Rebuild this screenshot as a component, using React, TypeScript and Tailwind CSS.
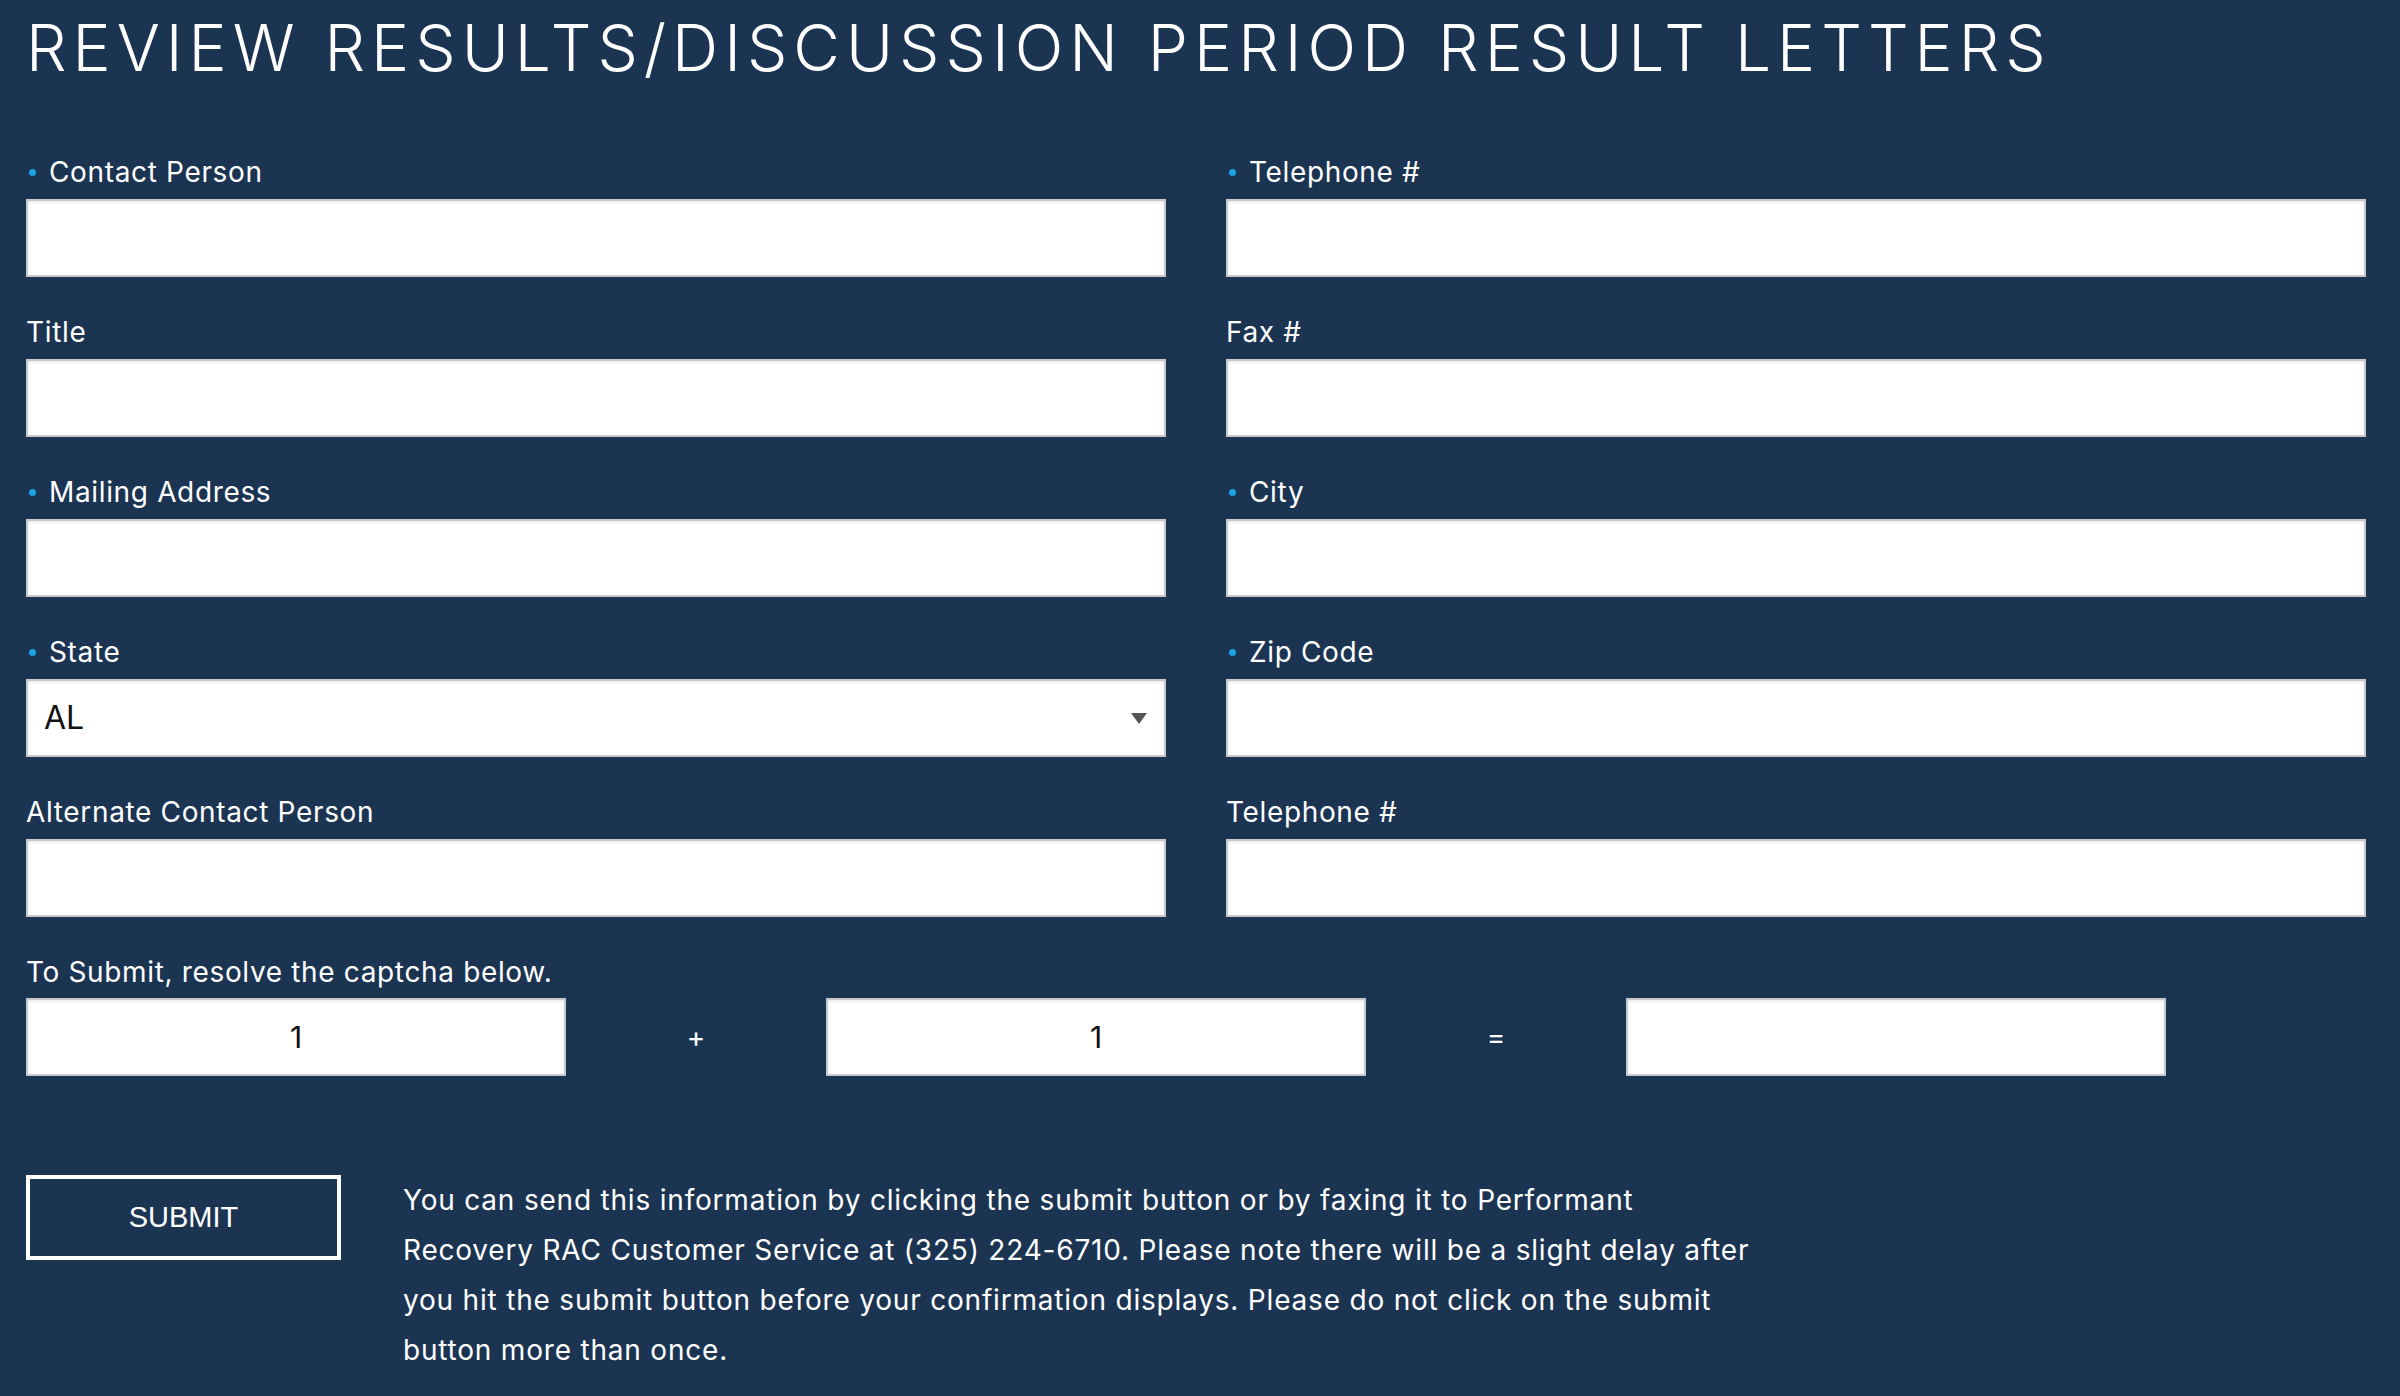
import React from "react";

interface FieldProps {
  label: string;
  required?: boolean;
  children?: React.ReactNode;
}

const boxCls =
  "block h-[78px] bg-white border-2 border-[#c9c9c9] shadow-[inset_0_2px_3px_rgba(0,0,0,0.08)] px-[26px] text-[30px] text-[#111] outline-none";

const Field: React.FC<FieldProps> = ({ label, required, children }) => {
  return (
    <div className="mb-[37px]">
      <label className="flex items-center h-[36px] mb-[9px] text-[28px] text-white tracking-[0.65px]">
        {required && (
          <span className="inline-block w-[7px] h-[7px] rounded-full bg-[#1ba1e2] ml-[3px] mr-[13px]" />
        )}
        {label}
      </label>
      {children ?? <input type="text" className={`${boxCls} w-full`} />}
    </div>
  );
};

const states = ["AL", "AK", "AZ", "AR", "CA", "CO", "CT", "DE", "FL", "GA"];

export default function App() {
  return (
    <div
      className="min-h-screen bg-[#1b3452] pl-[26px] pr-[34px] pt-[16px] pb-[40px]"
      style={{ fontFamily: "Inter, 'Open Sans', sans-serif" }}
    >
      <h1 className="text-[64px] leading-none font-light text-white tracking-[6px] mb-[74px]">
        REVIEW RESULTS/DISCUSSION PERIOD RESULT LETTERS
      </h1>

      <form onSubmit={(e) => e.preventDefault()}>
        <div className="grid grid-cols-2 gap-x-[60px]">
          <Field label="Contact Person" required />
          <Field label="Telephone #" required />
          <Field label="Title" />
          <Field label="Fax #" />
          <Field label="Mailing Address" required />
          <Field label="City" required />
          <Field label="State" required>
            <div className="relative">
              <select className={`${boxCls} w-full appearance-none pl-[16px] text-[32px]`} defaultValue="AL">
                {states.map((s) => (
                  <option key={s} value={s}>
                    {s}
                  </option>
                ))}
              </select>
              <svg
                className="absolute right-[19px] top-[34px] pointer-events-none"
                width="16"
                height="11"
                viewBox="0 0 16 11"
              >
                <path d="M0 0h16L8 11z" fill="#555" />
              </svg>
            </div>
          </Field>
          <Field label="Zip Code" required />
          <Field label="Alternate Contact Person" />
          <Field label="Telephone #" />
        </div>

        <div className="flex items-center h-[36px] mb-[8px] text-[28px] text-white tracking-[0.65px]">
          To Submit, resolve the captcha below.
        </div>
        <div className="flex items-center">
          <input type="text" readOnly defaultValue="1" className={`${boxCls} w-[540px] text-center`} />
          <span className="w-[260px] text-center text-[28px] text-white">+</span>
          <input type="text" readOnly defaultValue="1" className={`${boxCls} w-[540px] text-center`} />
          <span className="w-[260px] text-center text-[28px] text-white">=</span>
          <input type="text" className={`${boxCls} w-[540px] text-center`} />
        </div>

        <div className="flex items-start gap-[62px] mt-[99px]">
          <button
            type="submit"
            className="w-[315px] h-[85px] border-4 border-white text-white text-[29px] shrink-0"
            style={{ fontFamily: "'Liberation Sans', Arial, sans-serif" }}
          >
            SUBMIT
          </button>
          <p className="text-[28px] leading-[50px] text-white tracking-[0.8px] whitespace-nowrap">
            You can send this information by clicking the submit button or by faxing it to Performant
            <br />
            Recovery RAC Customer Service at (325) 224-6710. Please note there will be a slight delay after
            <br />
            you hit the submit button before your confirmation displays. Please do not click on the submit
            <br />
            button more than once.
          </p>
        </div>
      </form>
    </div>
  );
}
